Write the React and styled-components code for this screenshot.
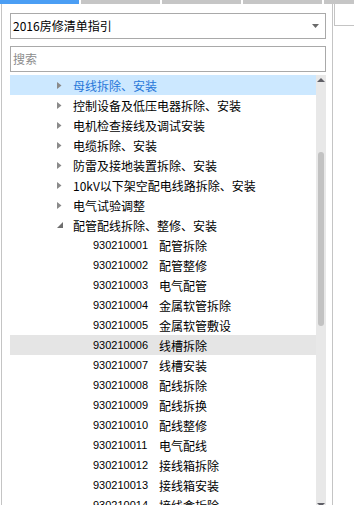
import React from "react";
import styled, { createGlobalStyle } from "styled-components";

const GlobalStyle = createGlobalStyle`
  html, body {
    margin: 0;
    padding: 0;
    background: #fff;
  }
  body {
    font-family: "Noto Sans CJK SC", "Liberation Sans", sans-serif;
    font-size: 12px;
    color: #000;
  }
`;

const groups = [
  { name: "母线拆除、安装", selected: true },
  { name: "控制设备及低压电器拆除、安装" },
  { name: "电机检查接线及调试安装" },
  { name: "电缆拆除、安装" },
  { name: "防雷及接地装置拆除、安装" },
  { name: "10kV以下架空配电线路拆除、安装" },
  { name: "电气试验调整" },
  { name: "配管配线拆除、整修、安装", open: true },
];

const items = [
  ["930210001", "配管拆除"],
  ["930210002", "配管整修"],
  ["930210003", "电气配管"],
  ["930210004", "金属软管拆除"],
  ["930210005", "金属软管敷设"],
  ["930210006", "线槽拆除"],
  ["930210007", "线槽安装"],
  ["930210008", "配线拆除"],
  ["930210009", "配线拆换"],
  ["930210010", "配线整修"],
  ["930210011", "电气配线"],
  ["930210012", "接线箱拆除"],
  ["930210013", "接线箱安装"],
  ["930210014", "接线盒拆除"],
];

const Page = styled.div`
  width: 354px;
  height: 505px;
  overflow: hidden;
  display: flex;
  flex-direction: column;
`;

const TabStrip = styled.div`
  display: flex;
  gap: 2px;
  height: 4px;
  flex-shrink: 0;
`;

const TabBar = styled.div`
  width: ${(p) => (p.$last ? "auto" : "79px")};
  flex: ${(p) => (p.$last ? 1 : "none")};
  background: ${(p) => (p.$active ? "#4b9ef4" : "#c6c6c6")};
`;

const Body = styled.div`
  flex: 1;
  display: flex;
  min-height: 0;
`;

const Panel = styled.div`
  margin-left: 1px;
  border-left: 1px solid #c4c4c4;
  border-right: 1px solid #c4c4c4;
  padding: 9px 6px 0 8px;
  box-sizing: border-box;
  width: 334px;
  display: flex;
  flex-direction: column;
`;

const SideBox = styled.div`
  width: 19px;
  height: 21px;
  border-left: 1px solid #c4c4c4;
  border-bottom: 1px solid #c4c4c4;
  margin-left: 1px;
`;

const Field = styled.div`
  height: 26px;
  flex-shrink: 0;
  box-sizing: border-box;
  border: 1px solid #a9a9a9;
  display: flex;
  align-items: center;
  padding: 0 6px 0 2px;
  color: ${(p) => (p.$placeholder ? "#8c8c8c" : "#000")};
  margin-bottom: ${(p) => p.$gap}px;
`;

const FieldText = styled.span`
  flex: 1;
  line-height: 12px;
`;

const List = styled.div`
  height: 435px;
  flex-shrink: 0;
  display: flex;
`;

const Rows = styled.div`
  flex: 1;
  overflow: hidden;
`;

const Row = styled.div`
  height: 20px;
  display: flex;
  align-items: center;
  padding-left: ${(p) => p.$indent}px;
  background: ${(p) => (p.$selected ? "#cce8ff" : p.$hover ? "#e5e5e5" : "transparent")};
  color: ${(p) => (p.$selected ? "#2776d8" : "#000")};
  white-space: nowrap;
`;

const Toggle = styled.span`
  width: 16px;
  display: flex;
  align-items: center;
`;

const Code = styled.span`
  width: 66px;
  font-family: "Liberation Sans", sans-serif;
  font-size: 11px;
`;

const ScrollTrack = styled.div`
  width: 10px;
  background: #e8e8e8;
  display: flex;
  flex-direction: column;
  align-items: center;
  padding: 3px 0;
  box-sizing: border-box;
`;

const ScrollThumb = styled.div`
  width: 6px;
  height: 174px;
  margin-top: ${(p) => p.$top}px;
  background: #c2c2c2;
  border-radius: 3px;
`;

const Spacer = styled.div`
  flex: 1;
`;

const DownTri = () => (
  <svg width="7" height="4" viewBox="0 0 7 4">
    <path d="M0 0H7L3.5 4Z" fill="#6a6a6a" />
  </svg>
);

const Collapsed = () => (
  <svg width="5" height="7" viewBox="0 0 5 7">
    <path d="M0 0L4.5 3.5L0 7Z" fill="#8a8a8a" />
  </svg>
);

const Expanded = () => (
  <svg width="6" height="6" viewBox="0 0 6 6">
    <path d="M6 0V6H0Z" fill="#6e6e6e" />
  </svg>
);

const ScrollArrow = ({ up }) => (
  <svg width="8" height="4" viewBox="0 0 8 4">
    <path d={up ? "M0 4H8L4 0Z" : "M0 0H8L4 4Z"} fill="#5f5f66" />
  </svg>
);

const App = () => (
  <Page>
    <GlobalStyle />
    <TabStrip>
      <TabBar $active />
      <TabBar />
      <TabBar />
      <TabBar />
      <TabBar $last />
    </TabStrip>
    <Body>
      <Panel>
        <Field $gap={7}>
          <FieldText>2016房修清单指引</FieldText>
          <DownTri />
        </Field>
        <Field $gap={3} $placeholder>
          <FieldText>搜索</FieldText>
        </Field>
        <List>
          <Rows>
            {groups.map((g) => (
              <Row key={g.name} $indent={47} $selected={g.selected}>
                <Toggle>{g.open ? <Expanded /> : <Collapsed />}</Toggle>
                {g.name}
              </Row>
            ))}
            {items.map(([code, name]) => (
              <Row key={code} $indent={83} $hover={code === "930210006"}>
                <Code>{code}</Code>
                {name}
              </Row>
            ))}
          </Rows>
          <ScrollTrack>
            <ScrollArrow up />
            <ScrollThumb $top={70} />
            <Spacer />
            <ScrollArrow />
          </ScrollTrack>
        </List>
      </Panel>
      <SideBox />
    </Body>
  </Page>
);

export default App;
